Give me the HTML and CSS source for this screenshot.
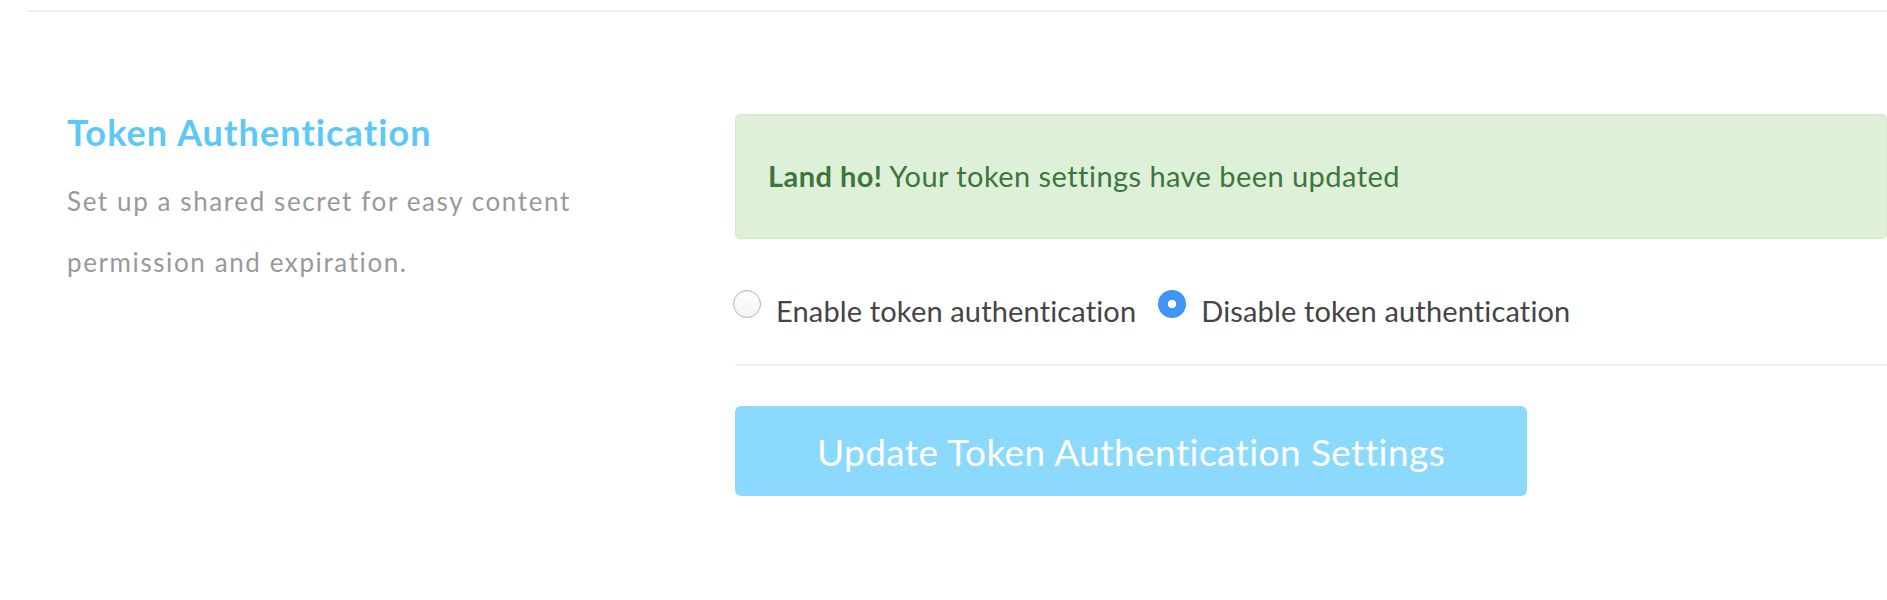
FILE: index.html
```html
<!DOCTYPE html>
<html lang="en">

    <head>
        <meta charset="UTF-8">
        <meta name="viewport" content="width=device-width, initial-scale=1.0">
        <title>Token Authentication</title>

        <link rel="stylesheet" href="styles.css">
    </head>

    <body>
        <main class="settings">
            <section class="setting">
                <div class="setting-info">
                    <h2>Token Authentication</h2>
                    <p>Set up a shared secret for easy content permission and expiration.</p>
                </div>

                <form class="setting-form">
                    <div class="alert alert-success"><strong>Land ho!</strong> Your token settings have been updated</div>

                    <div class="radios">
                        <label><input type="radio" name="token_auth" value="enable"> Enable token authentication</label>
                        <label><input type="radio" name="token_auth" value="disable" checked> Disable token authentication</label>
                    </div>

                    <hr>

                    <button type="submit">Update Token Authentication Settings</button>
                </form>
            </section>
        </main>
    </body>

</html>
```

FILE: styles.css
```css
* {
    box-sizing: border-box;
}

body,
html {
    margin: 0;
    padding: 0;
    background-color: #fff;
    font-family: Lato, 'Open Sans', sans-serif;
    overflow-x: hidden;
}

.settings {
    margin: 10px 0 0 27px;
    border-top: 2px solid #eee;
}

.setting {
    display: grid;
    grid-template-columns: 668px 1fr;
    padding: 98px 0 0 40px;
}

.setting-info h2 {
    margin: 0;
    font-size: 36px;
    line-height: 44px;
    font-weight: 700;
    letter-spacing: 1.1px;
    color: #5cc8f8;
}

.setting-info p {
    margin: 17px 0 0;
    max-width: 560px;
    font-size: 26px;
    line-height: 61px;
    letter-spacing: 1.6px;
    color: #999;
}

.setting-form {
    padding-top: 4px;
}

.alert {
    padding: 40px 32px 42px;
    border: 1px solid transparent;
    border-radius: 5px;
    font-size: 29px;
    line-height: 41px;
    letter-spacing: 0.45px;
}

.alert-success {
    background-color: #dff0d8;
    border-color: #d6e9c6;
    color: #3c763d;
}

.radios {
    display: flex;
    gap: 22px;
    margin-top: 52px;
    margin-left: -2px;
}

.radios label {
    display: flex;
    align-items: flex-start;
    gap: 15px;
    font-size: 29px;
    line-height: 40px;
    letter-spacing: 0.15px;
    color: #444;
    cursor: pointer;
}

.radios input {
    appearance: none;
    -webkit-appearance: none;
    flex: none;
    width: 28px;
    height: 28px;
    margin: -1px 0 0;
    border-radius: 50%;
    border: 1px solid #b5b5b5;
    background: linear-gradient(#fff, #f3f3f3);
    box-shadow: inset 0 1px 1px rgba(0, 0, 0, 0.05);
}

.radios input:checked {
    border: none;
    background: #3e96f6 radial-gradient(circle, #fff 0 4px, transparent 4.5px);
    box-shadow: none;
}

hr {
    margin: 33px 0 0;
    border: none;
    border-top: 2px solid #eee;
}

button {
    display: block;
    width: 792px;
    height: 90px;
    margin-top: 40px;
    border: none;
    border-radius: 6px;
    background-color: #8bd9fd;
    color: #fff;
    font-family: inherit;
    font-size: 37px;
    letter-spacing: 0.43px;
    cursor: pointer;
}
```
